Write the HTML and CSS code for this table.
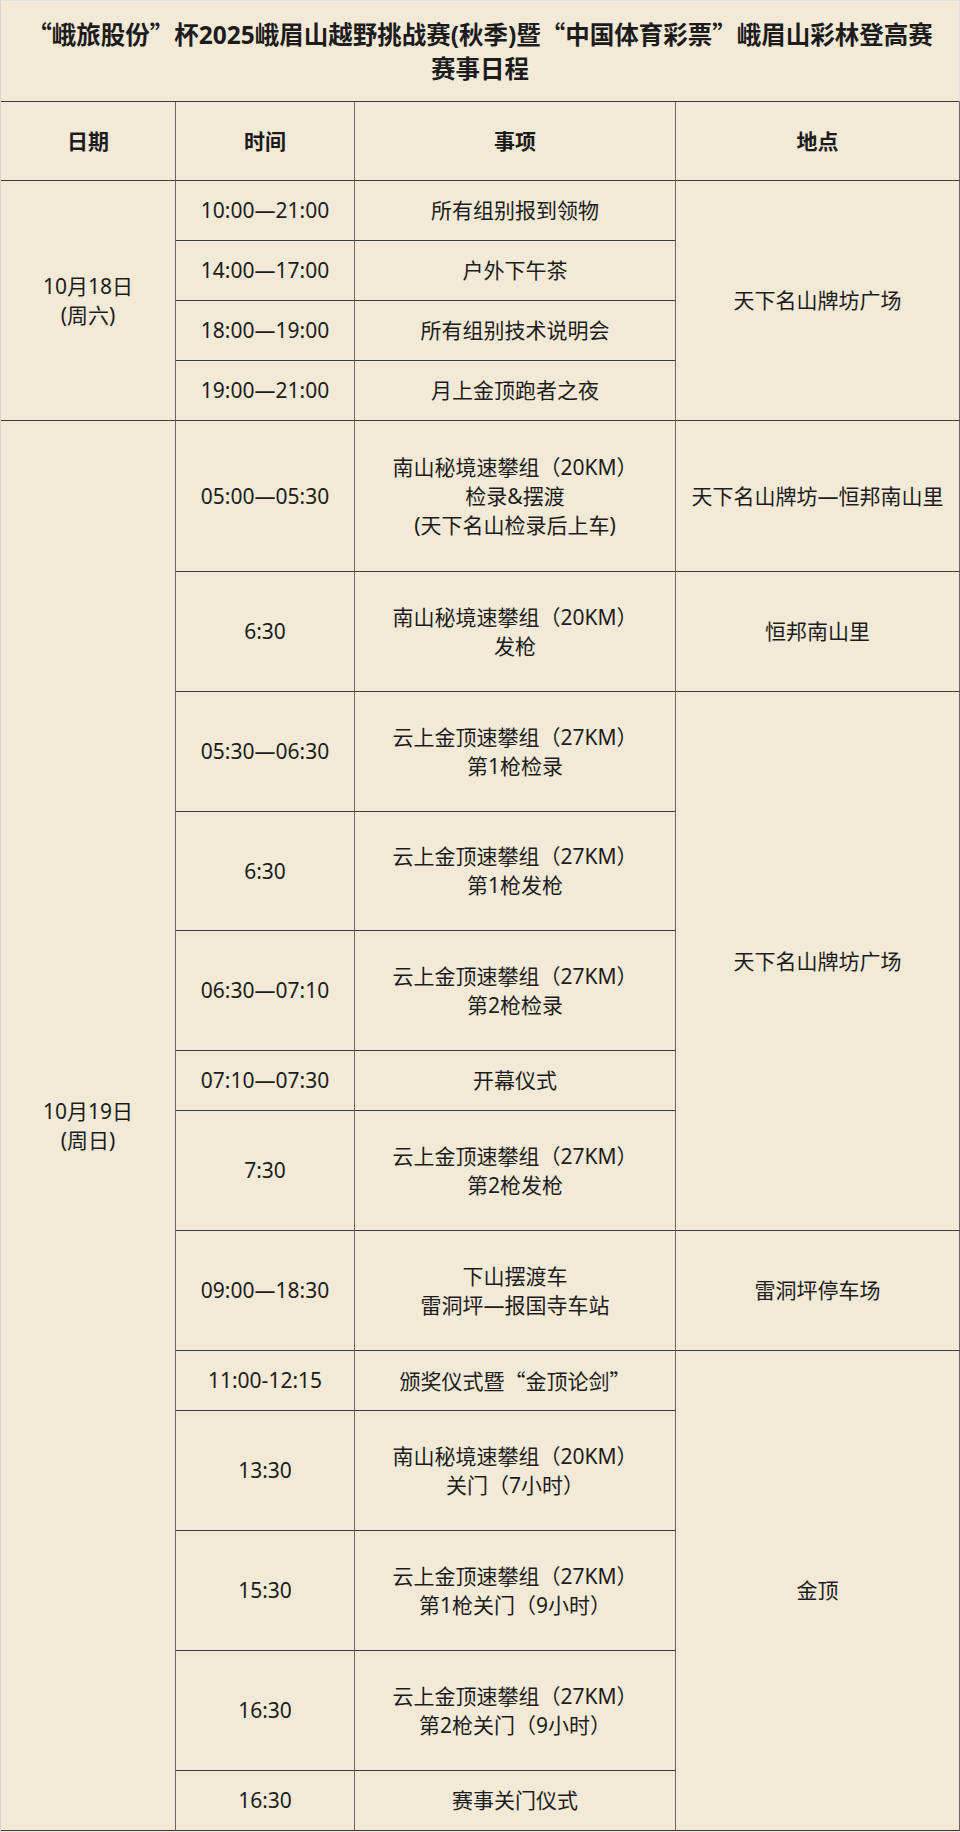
FILE: index.html
```html
<!DOCTYPE html>
<html lang="zh-CN">
<head>
<meta charset="utf-8">
<title>赛事日程</title>
<link rel="stylesheet" href="styles.css">
</head>
<body>
<div class="sheet">
  <div class="cell title"><div><span class="q">“</span>峨旅股份<span class="q">”</span>杯2025峨眉山越野挑战赛(秋季)暨<span class="q">“</span>中国体育彩票<span class="q">”</span>峨眉山彩林登高赛<br>赛事日程</div></div>

  <div class="cell head">日期</div>
  <div class="cell head">时间</div>
  <div class="cell head">事项</div>
  <div class="cell head">地点</div>

  <div class="cell date d18">10月18日<br>(周六)</div>
  <div class="cell">10:00—21:00</div>
  <div class="cell">所有组别报到领物</div>
  <div class="cell loc l1">天下名山牌坊广场</div>
  <div class="cell">14:00—17:00</div>
  <div class="cell">户外下午茶</div>
  <div class="cell">18:00—19:00</div>
  <div class="cell">所有组别技术说明会</div>
  <div class="cell">19:00—21:00</div>
  <div class="cell">月上金顶跑者之夜</div>

  <div class="cell date d19">10月19日<br>(周日)</div>
  <div class="cell">05:00—05:30</div>
  <div class="cell">南山秘境速攀组（20KM）<br>检录&amp;摆渡<br>(天下名山检录后上车)</div>
  <div class="cell loc">天下名山牌坊—恒邦南山里</div>

  <div class="cell">6:30</div>
  <div class="cell">南山秘境速攀组（20KM）<br>发枪</div>
  <div class="cell loc">恒邦南山里</div>

  <div class="cell">05:30—06:30</div>
  <div class="cell">云上金顶速攀组（27KM）<br>第1枪检录</div>
  <div class="cell loc l2">天下名山牌坊广场</div>
  <div class="cell">6:30</div>
  <div class="cell">云上金顶速攀组（27KM）<br>第1枪发枪</div>
  <div class="cell">06:30—07:10</div>
  <div class="cell">云上金顶速攀组（27KM）<br>第2枪检录</div>
  <div class="cell">07:10—07:30</div>
  <div class="cell">开幕仪式</div>
  <div class="cell">7:30</div>
  <div class="cell">云上金顶速攀组（27KM）<br>第2枪发枪</div>

  <div class="cell">09:00—18:30</div>
  <div class="cell">下山摆渡车<br>雷洞坪—报国寺车站</div>
  <div class="cell loc">雷洞坪停车场</div>

  <div class="cell">11:00-12:15</div>
  <div class="cell"><div>颁奖仪式暨<span class="q">“</span>金顶论剑<span class="q">”</span></div></div>
  <div class="cell loc l3">金顶</div>
  <div class="cell">13:30</div>
  <div class="cell">南山秘境速攀组（20KM）<br>关门（7小时）</div>
  <div class="cell">15:30</div>
  <div class="cell">云上金顶速攀组（27KM）<br>第1枪关门（9小时）</div>
  <div class="cell">16:30</div>
  <div class="cell">云上金顶速攀组（27KM）<br>第2枪关门（9小时）</div>
  <div class="cell">16:30</div>
  <div class="cell">赛事关门仪式</div>
</div>
</body>
</html>
```

FILE: styles.css
```css
html, body {
  margin: 0;
  padding: 0;
  background: #f2e9d6;
}

body {
  font-family: "Noto Sans", "Noto Sans CJK SC", sans-serif;
  color: #1c1c1c;
}

.q {
  font-family: "Noto Sans CJK SC", sans-serif;
}

.sheet {
  box-sizing: border-box;
  width: 960px;
  height: 1832px;
  border-top: 1px solid #e2e0dc;
  border-left: 1px solid #d6d3ce;
  display: grid;
  grid-template-columns: 175px 179px 321px 284px;
  grid-template-rows: 101px 79px 60px 60px 60px 60px 151px 120px 120px 119px 120px 60px 120px 120px 60px 120px 120px 120px 60px;
  background: #f2e9d6;
}

.cell {
  box-sizing: border-box;
  display: flex;
  align-items: center;
  justify-content: center;
  text-align: center;
  font-size: 21px;
  line-height: 29px;
  border-right: 1px solid #6b6760;
  border-bottom: 1px solid #3f3d3a;
  white-space: nowrap;
}

.title {
  grid-column: 1 / span 4;
  font-size: 24.5px;
  line-height: 34px;
  font-weight: 700;
  border-right: 1px solid #e6e2da;
  padding-top: 1px;
}

.head {
  font-weight: 700;
}

.d18 { grid-row: 3 / span 4; }
.d19 { grid-row: 7 / span 13; }
.l1 { grid-row: 3 / span 4; }
.l2 { grid-row: 9 / span 5; }
.l3 { grid-row: 15 / span 5; }

.date { grid-column: 1; }
.loc { grid-column: 4; }
```
